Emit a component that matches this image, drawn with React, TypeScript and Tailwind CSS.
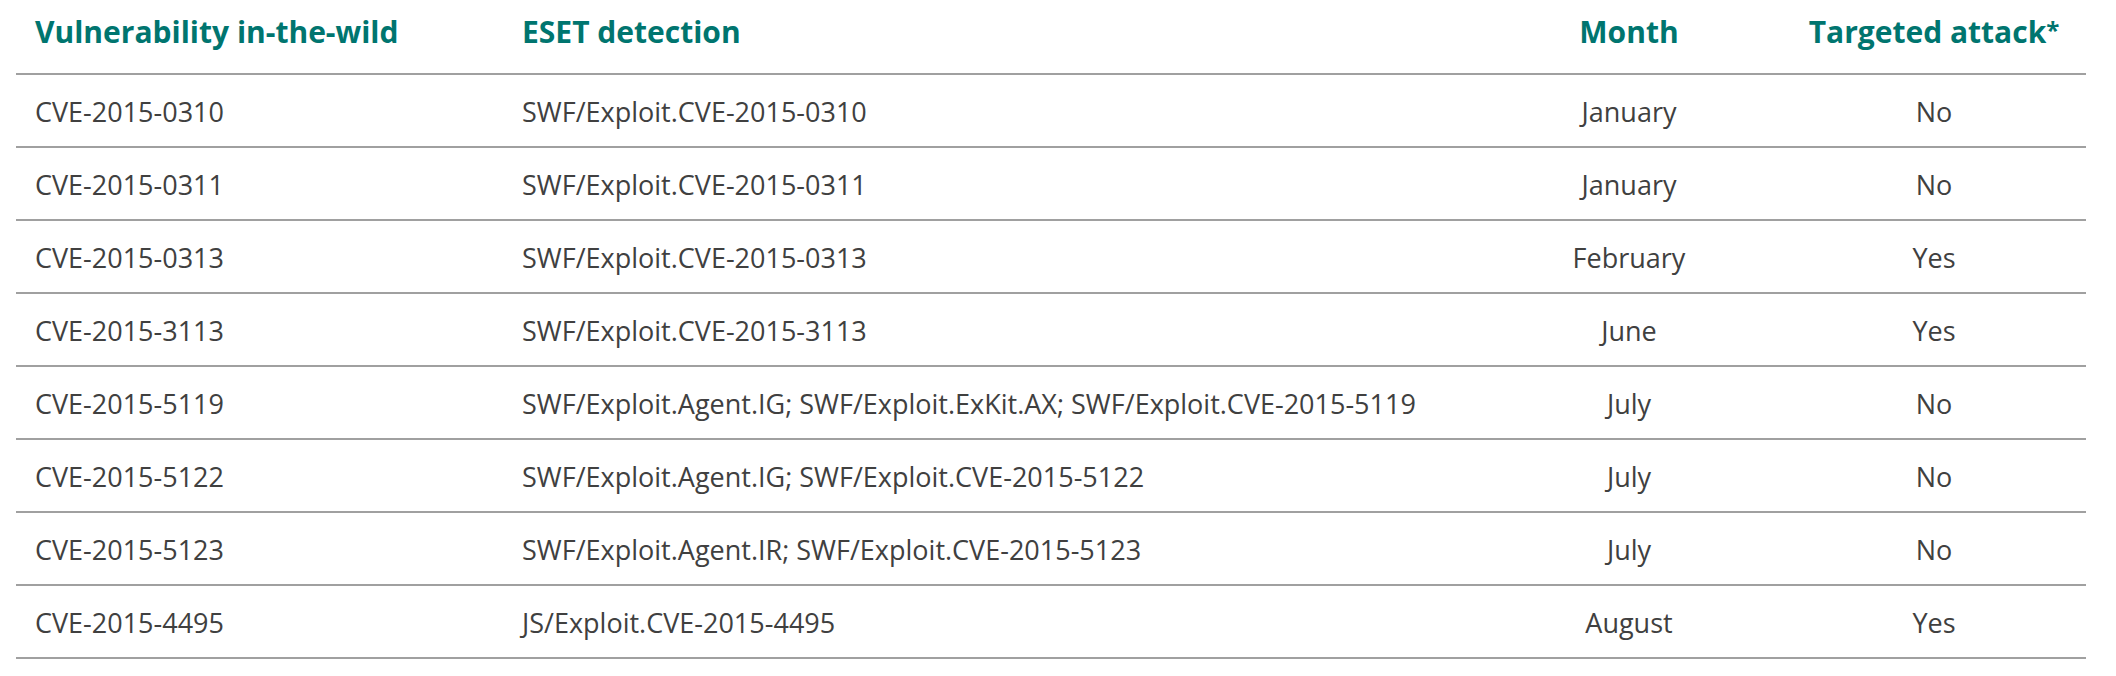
import React from 'react';

type Row = { cve: string; detection: string; month: string; targeted: string };

const rows: Row[] = [
  { cve: 'CVE-2015-0310', detection: 'SWF/Exploit.CVE-2015-0310', month: 'January', targeted: 'No' },
  { cve: 'CVE-2015-0311', detection: 'SWF/Exploit.CVE-2015-0311', month: 'January', targeted: 'No' },
  { cve: 'CVE-2015-0313', detection: 'SWF/Exploit.CVE-2015-0313', month: 'February', targeted: 'Yes' },
  { cve: 'CVE-2015-3113', detection: 'SWF/Exploit.CVE-2015-3113', month: 'June', targeted: 'Yes' },
  {
    cve: 'CVE-2015-5119',
    detection: 'SWF/Exploit.Agent.IG; SWF/Exploit.ExKit.AX; SWF/Exploit.CVE-2015-5119',
    month: 'July',
    targeted: 'No',
  },
  { cve: 'CVE-2015-5122', detection: 'SWF/Exploit.Agent.IG; SWF/Exploit.CVE-2015-5122', month: 'July', targeted: 'No' },
  { cve: 'CVE-2015-5123', detection: 'SWF/Exploit.Agent.IR; SWF/Exploit.CVE-2015-5123', month: 'July', targeted: 'No' },
  { cve: 'CVE-2015-4495', detection: 'JS/Exploit.CVE-2015-4495', month: 'August', targeted: 'Yes' },
];

const cols = 'grid grid-cols-[487px_973px_306px_304px]';
const cell = 'flex items-center border-b-2 border-[#a0a0a0]';

const App: React.FC = () => {
  return (
    <div className="w-[2116px] h-[676px] bg-white font-['Open_Sans',sans-serif]">
      <div className="ml-4 w-[2070px]">
        {/* Header */}
        <div className={`${cols} h-[75px] text-[30px] font-bold text-[#00756f] leading-none`}>
          <div className={`${cell} pl-[19px] pb-[10px]`}>Vulnerability in-the-wild</div>
          <div className={`${cell} pl-[19px] pb-[10px]`}>ESET detection</div>
          <div className={`${cell} justify-center pb-[10px]`}>Month</div>
          <div className={`${cell} justify-center pb-[10px]`}>
            Targeted attack<span className="text-[24px] self-start mt-[18px]">*</span>
          </div>
        </div>

        {/* Body */}
        {rows.map((r) => (
          <div key={r.cve} className={`${cols} h-[73px] text-[27px] text-[#404040] leading-none`}>
            <div className={`${cell} pl-[19px] pt-[2px]`}>{r.cve}</div>
            <div className={`${cell} pl-[19px] pt-[2px]`}>{r.detection}</div>
            <div className={`${cell} justify-center pt-[2px]`}>{r.month}</div>
            <div className={`${cell} justify-center pt-[2px]`}>{r.targeted}</div>
          </div>
        ))}
      </div>
    </div>
  );
};

export default App;
